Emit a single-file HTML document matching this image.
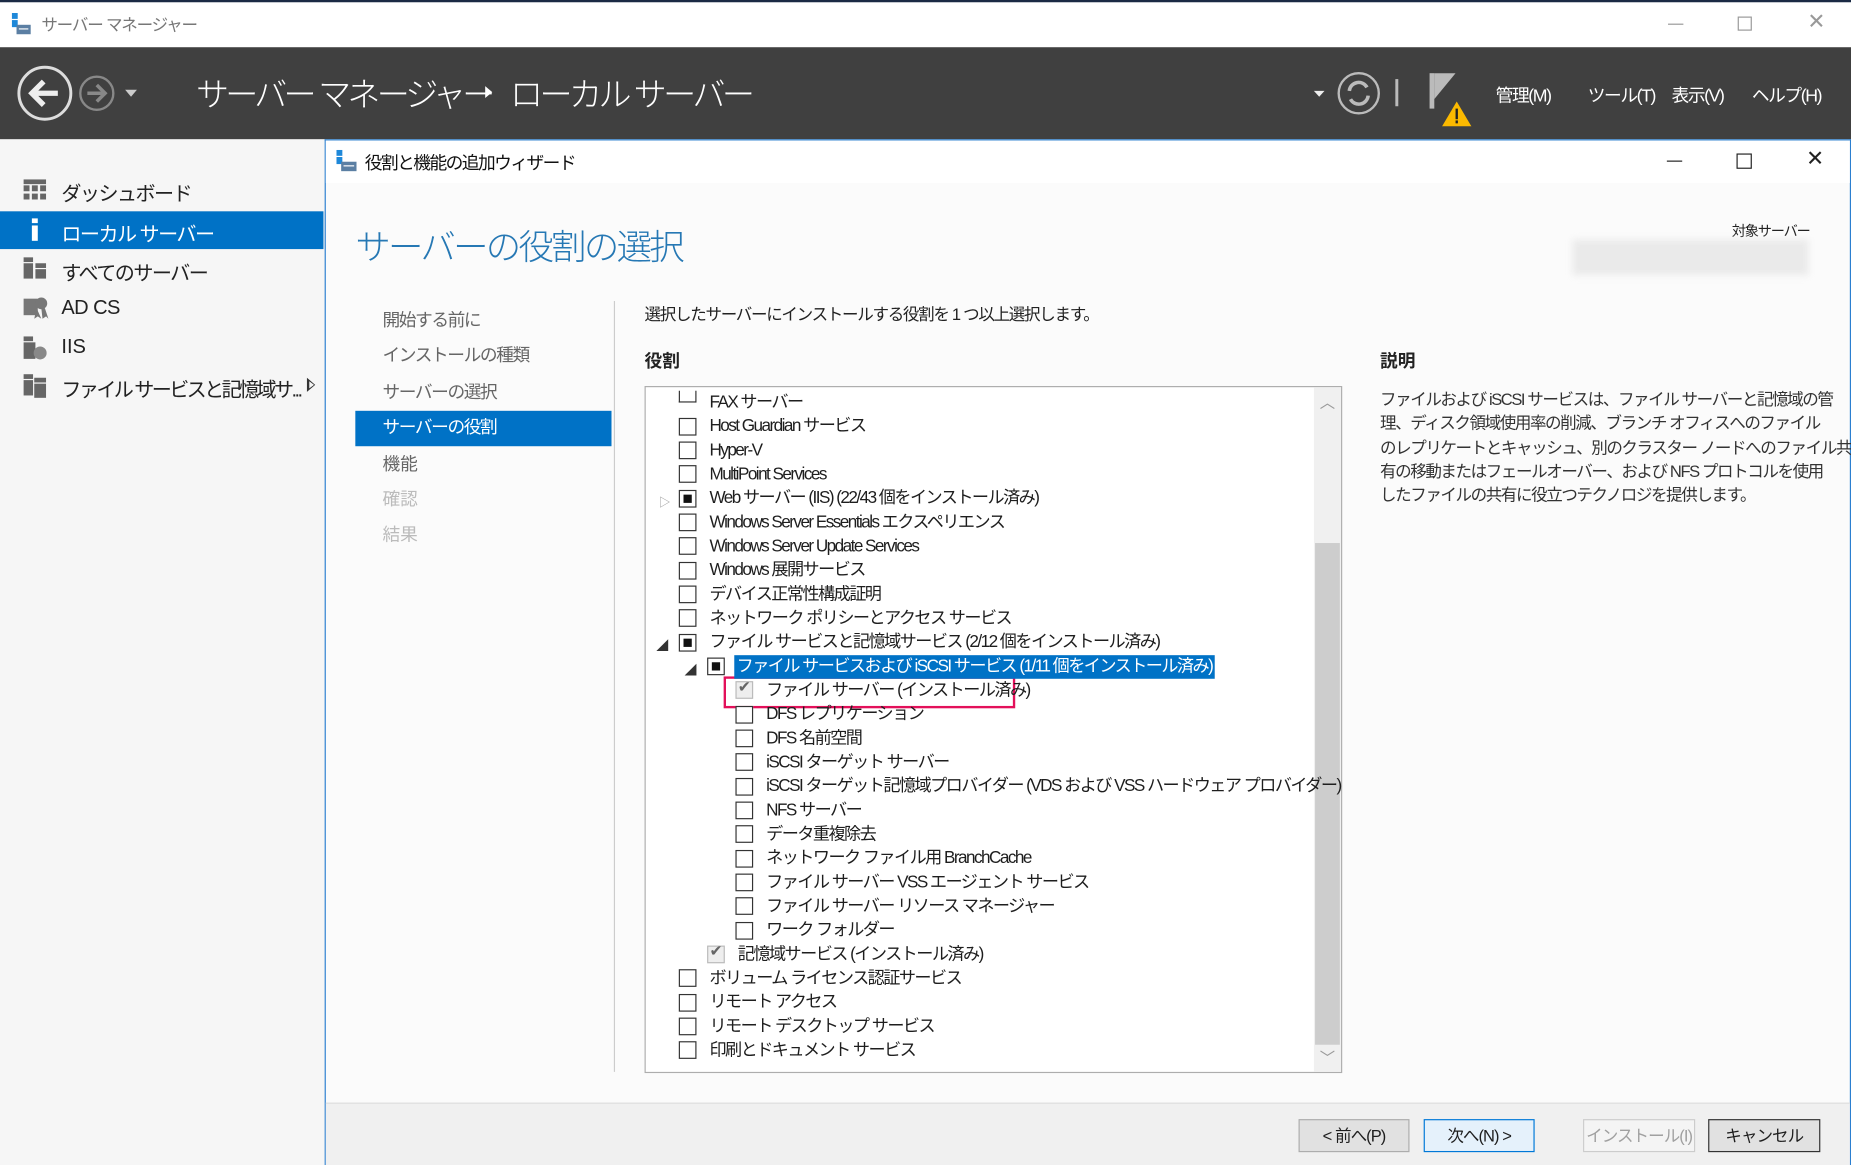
<!DOCTYPE html>
<html><head><meta charset="utf-8">
<style>
*{margin:0;padding:0;box-sizing:border-box}
html,body{width:1851px;height:1165px;overflow:hidden;background:#fff}
#s{position:absolute;left:0;top:0;width:1568px;height:987px;transform:scale(1.18049);transform-origin:0 0;font-family:"Liberation Sans","Noto Sans CJK JP",sans-serif;color:#1e1e1e}
.a{position:absolute;white-space:nowrap}
.cb{position:absolute;width:15px;height:15px;border:1px solid #333;background:#fff}
.cb.f::after{content:"";position:absolute;left:3px;top:3px;width:7px;height:7px;background:#111}
.cb.c{border-color:#bbb;background:#eee}
.t{position:absolute;font-size:14.5px;letter-spacing:-1.3px;line-height:20px;white-space:nowrap}
.btn{position:absolute;top:948px;height:28px;border:1px solid #adadad;background:#e1e1e1;font-size:14px;text-align:center;line-height:26px;letter-spacing:-0.8px}
.m{position:absolute;top:70px;font-size:15px;color:#fff;letter-spacing:-1.2px}
</style></head><body><div id="s">
<div class="a" style="left:0;top:0;width:1568px;height:2px;background:#1b2a44"></div>
<div class="a" style="left:0;top:2px;width:1568px;height:38px;background:#fff"></div>
<svg class="a" style="left:10px;top:11px" width="20" height="20"><rect x="0" y="0" width="5" height="5" fill="#1e88d9"/><rect x="0" y="6" width="5" height="6" fill="#1e88d9"/><rect x="4" y="10" width="12" height="8" fill="#5b7fa3"/><rect x="6" y="13" width="8" height="1" fill="#fff"/></svg>
<div class="a" style="left:35px;top:11px;font-size:14px;color:#777;letter-spacing:-1px">サーバー マネージャー</div>
<div class="a" style="left:1413px;top:20px;width:13px;height:1px;background:#999"></div>
<div class="a" style="left:1472px;top:14px;width:12px;height:12px;border:1px solid #999"></div>
<div class="a" style="left:1531px;top:8px;font-size:18px;color:#999">✕</div>
<div class="a" style="left:0;top:40px;width:1568px;height:78px;background:#404040"></div>
<svg class="a" style="left:12px;top:52px" width="115" height="56">
<circle cx="26" cy="27" r="22" fill="none" stroke="#ddd" stroke-width="2.5"/>
<path d="M37 27H16M25 17l-10 10 10 10" fill="none" stroke="#eee" stroke-width="4.5"/>
<circle cx="70" cy="27" r="14" fill="none" stroke="#888" stroke-width="2"/>
<path d="M62 27h14M70 20l7 7-7 7" fill="none" stroke="#888" stroke-width="3"/>
<path d="M94 24h10l-5 6z" fill="#ccc"/></svg>
<div class="a" style="left:166px;top:59px;font-size:28px;color:#fff;letter-spacing:-3.2px;font-weight:300">サーバー マネージャー</div>
<div class="a" style="left:411px;top:73px;width:0;height:0;border-left:6px solid #fff;border-top:5px solid transparent;border-bottom:5px solid transparent"></div>
<div class="a" style="left:432px;top:59px;font-size:28px;color:#fff;letter-spacing:-3px;font-weight:300">ローカル サーバー</div>
<svg class="a" style="left:1110px;top:55px" width="140" height="52">
<path d="M3 22h9l-4.5 5z" fill="#eee"/>
<circle cx="41" cy="24" r="17" fill="none" stroke="#bbb" stroke-width="2"/>
<path d="M33 22a8 8 0 0 1 15-3M49 26a8 8 0 0 1-15 3" fill="none" stroke="#bbb" stroke-width="3"/>
<rect x="72" y="12" width="2.5" height="23" fill="#bbb"/>
<rect x="101" y="7" width="4" height="30" fill="#bbb"/><path d="M105 7h18l-18 22z" fill="#bbb"/>
<path d="M124 31l13 22h-26z" fill="#fbb900"/><rect x="123" y="37" width="2" height="9" fill="#222"/><rect x="123" y="47" width="2" height="2.5" fill="#222"/></svg>
<div class="m" style="left:1267px">管理(M)</div>
<div class="m" style="left:1345px">ツール(T)</div>
<div class="m" style="left:1416px">表示(V)</div>
<div class="m" style="left:1484px">ヘルプ(H)</div>
<div class="a" style="left:0;top:118px;width:275px;height:869px;background:#f6f6f6"></div>
<div class="a" style="left:0;top:179px;width:274px;height:32px;background:#0072c6"></div>
<svg class="a" style="left:18px;top:150px" width="26" height="200">
<g fill="#666"><rect x="2" y="2" width="19" height="4"/><rect x="2" y="7" width="5" height="5"/><rect x="9" y="7" width="5" height="5"/><rect x="16" y="7" width="5" height="5"/><rect x="2" y="14" width="5" height="5"/><rect x="9" y="14" width="5" height="5"/><rect x="16" y="14" width="5" height="5"/></g>
<rect x="9" y="35" width="5" height="4" fill="#fff"/><rect x="9" y="41" width="5" height="13" fill="#fff"/>
<g fill="#666"><rect x="2" y="68" width="8" height="4"/><rect x="2" y="73" width="8" height="13"/><rect x="12" y="73" width="9" height="4"/><rect x="12" y="78" width="9" height="8"/></g>
<g fill="#777"><rect x="2" y="103" width="12" height="14"/><circle cx="17" cy="107" r="5"/><path d="M13 111l-2 9 3-2 3 2zM17 111l1 9 3-2 2 2-3-9z"/></g>
<g fill="#666"><rect x="2" y="135" width="8" height="4"/><rect x="2" y="140" width="10" height="14"/><circle cx="16" cy="149" r="5.5" fill="#888"/></g>
<g fill="#666"><rect x="2" y="167" width="8" height="4"/><rect x="2" y="172" width="8" height="13"/><rect x="11" y="170" width="10" height="4"/><rect x="11" y="175" width="10" height="12"/></g></svg>
<div class="a" style="left:52px;top:150px;font-size:17px;letter-spacing:-1.3px;color:#222">ダッシュボード</div>
<div class="a" style="left:52px;top:184px;font-size:17px;letter-spacing:-1.3px;color:#fff">ローカル サーバー</div>
<div class="a" style="left:52px;top:217px;font-size:17px;letter-spacing:-1.3px;color:#222">すべてのサーバー</div>
<div class="a" style="left:52px;top:251px;font-size:17px;letter-spacing:-0.5px;color:#222">AD CS</div>
<div class="a" style="left:52px;top:284px;font-size:17px;color:#222">IIS</div>
<div class="a" style="left:52px;top:316px;font-size:17px;letter-spacing:-2.2px;color:#222">ファイル サービスと記憶域サ...</div>
<div class="a" style="left:260px;top:320px;width:0;height:0;border-left:7px solid #333;border-top:6px solid transparent;border-bottom:6px solid transparent"></div>
<div class="a" style="left:261.5px;top:322.5px;width:0;height:0;border-left:4px solid #f6f6f6;border-top:3.5px solid transparent;border-bottom:3.5px solid transparent"></div>
<div class="a" style="left:275px;top:118px;width:1293px;height:869px;background:#fbfbfb;border-left:1px solid #2b7fd0;border-top:1px solid #2b7fd0;border-right:1px solid #2b7fd0"></div>
<div class="a" style="left:276px;top:119px;width:1291px;height:36px;background:#fff"></div>
<svg class="a" style="left:285px;top:127px" width="20" height="20"><rect x="0" y="0" width="5" height="5" fill="#1e88d9"/><rect x="0" y="6" width="5" height="6" fill="#1e88d9"/><rect x="4" y="10" width="13" height="8" fill="#5b7fa3"/><rect x="6" y="13" width="9" height="1" fill="#fff"/></svg>
<div class="a" style="left:309px;top:127px;font-size:15px;letter-spacing:-1.3px;color:#111">役割と機能の追加ウィザード</div>
<div class="a" style="left:1412px;top:136px;width:13px;height:1px;background:#222"></div>
<div class="a" style="left:1471px;top:130px;width:13px;height:13px;border:1px solid #222"></div>
<div class="a" style="left:1530px;top:124px;font-size:18px;color:#222">✕</div>
<div class="a" style="left:301px;top:185px;font-size:30px;color:#2678b4;letter-spacing:-2.3px;font-weight:300">サーバーの役割の選択</div>
<div class="a" style="left:1467px;top:187px;font-size:12px;letter-spacing:-1px;color:#222">対象サーバー</div>
<div class="a" style="left:1332px;top:203px;width:200px;height:30px;background:#eaeaea;filter:blur(3px)"></div>
<div class="a" style="left:301px;top:348px;width:217px;height:30px;background:#0072c6"></div>
<div class="a" style="left:324px;top:262px;font-size:15px;color:#666;letter-spacing:-1.2px;line-height:20px">開始する前に</div>
<div class="a" style="left:324px;top:292px;font-size:15px;color:#666;letter-spacing:-1.2px;line-height:20px">インストールの種類</div>
<div class="a" style="left:324px;top:323px;font-size:15px;color:#666;letter-spacing:-1.2px;line-height:20px">サーバーの選択</div>
<div class="a" style="left:324px;top:353px;font-size:15px;color:#fff;letter-spacing:-1.2px;line-height:20px">サーバーの役割</div>
<div class="a" style="left:324px;top:384px;font-size:15px;color:#666;line-height:20px">機能</div>
<div class="a" style="left:324px;top:414px;font-size:15px;color:#bbb;line-height:20px">確認</div>
<div class="a" style="left:324px;top:444px;font-size:15px;color:#bbb;line-height:20px">結果</div>
<div class="a" style="left:520px;top:255px;width:1px;height:653px;background:#ccc"></div>
<div class="a" style="left:546px;top:256px;font-size:14px;letter-spacing:-1.1px;color:#222">選択したサーバーにインストールする役割を 1 つ以上選択します。</div>
<div class="a" style="left:546px;top:295px;font-size:15px;font-weight:bold;color:#222">役割</div>
<div class="a" style="left:1169px;top:295px;font-size:15px;font-weight:bold;color:#222">説明</div>
<div class="a" style="left:1169px;top:328px;font-size:14px;line-height:20.3px;letter-spacing:-1.2px;color:#333">ファイルおよび iSCSI サービスは、ファイル サーバーと記憶域の管<br>理、ディスク領域使用率の削減、ブランチ オフィスへのファイル<br>のレプリケートとキャッシュ、別のクラスター ノードへのファイル共<br>有の移動またはフェールオーバー、および NFS プロトコルを使用<br>したファイルの共有に役立つテクノロジを提供します。</div>
<div class="a" style="left:546px;top:327px;width:591px;height:582px;background:#fff;border:1px solid #adadad;overflow:hidden">
<div class="a" style="left:566px;top:0;width:23px;height:580px;background:#f0f0f0"></div>
<div class="a" style="left:567px;top:132px;width:21px;height:425px;background:#cdcdcd"></div>
<div class="a" style="left:571px;top:2px;font-size:13px;color:#999">︿</div>
<div class="a" style="left:571px;top:558px;font-size:13px;color:#999">﹀</div>
<div class="a" style="left:66px;top:245px;width:247px;height:27px;border:2px solid #e3105a"></div>
</div>
<div id="rows"></div>
<div class="a" style="left:276px;top:934px;width:1291px;height:53px;background:#f0f0f0;border-top:1px solid #ddd"></div>
<div class="btn" style="left:1100px;width:94px">&lt; 前へ(P)</div>
<div class="btn" style="left:1206px;width:94px;border-color:#0078d7;background:#e5f1fb">次へ(N) &gt;</div>
<div class="btn" style="left:1341px;width:95px;border-color:#ccc;background:#f4f4f4;color:#a0a0a0">インストール(I)</div>
<div class="btn" style="left:1447px;width:95px;border-color:#333">キャンセル</div>
</div>
<script>
var R=[[1,"","FAX サーバー"],[1,"","Host Guardian サービス"],[1,"","Hyper-V"],[1,"","MultiPoint Services"],[1,"f","Web サーバー (IIS) (22/43 個をインストール済み)","o"],[1,"","Windows Server Essentials エクスペリエンス"],[1,"","Windows Server Update Services"],[1,"","Windows 展開サービス"],[1,"","デバイス正常性構成証明"],[1,"","ネットワーク ポリシーとアクセス サービス"],[1,"f","ファイル サービスと記憶域サービス (2/12 個をインストール済み)","x"],[2,"f","ファイル サービスおよび iSCSI サービス (1/11 個をインストール済み)","x"],[3,"c","ファイル サーバー (インストール済み)"],[3,"","DFS レプリケーション"],[3,"","DFS 名前空間"],[3,"","iSCSI ターゲット サーバー"],[3,"","iSCSI ターゲット記憶域プロバイダー (VDS および VSS ハードウェア プロバイダー)"],[3,"","NFS サーバー"],[3,"","データ重複除去"],[3,"","ネットワーク ファイル用 BranchCache"],[3,"","ファイル サーバー VSS エージェント サービス"],[3,"","ファイル サーバー リソース マネージャー"],[3,"","ワーク フォルダー"],[2,"c","記憶域サービス (インストール済み)"],[1,"","ボリューム ライセンス認証サービス"],[1,"","リモート アクセス"],[1,"","リモート デスクトップ サービス"],[1,"","印刷とドキュメント サービス"]];
var h="";
R.forEach(function(r,i){var y=341+i*20.33;var cx=575+(r[0]-1)*24;
h+='<div class="cb '+r[1]+'" style="left:'+cx+'px;top:'+(y-7.5)+'px;'+(i==0?'height:10px;top:331px;border-top:none':'')+'">'+(r[1]=="c"?'<span style="position:absolute;left:1px;top:-4px;font-size:13px;color:#666">✔</span>':'')+'</div>';
var st=(i==11)?'color:#fff;background:#0072c6;padding:0 2px;margin-left:-3px':'color:#1e1e1e';
h+='<div class="t" style="left:'+(cx+26)+'px;top:'+(y-10)+'px;'+st+'">'+r[2]+'</div>';
if(r[3]=="o")h+='<div class="a" style="left:558px;top:'+(y-5)+'px;font-size:10px;color:#999">▷</div>';
if(r[3]=="x")h+='<div class="a" style="left:'+(cx-19)+'px;top:'+(y-6)+'px;font-size:10px;color:#333">◢</div>';
});
document.getElementById("rows").innerHTML=h;
</script>
</body></html>
